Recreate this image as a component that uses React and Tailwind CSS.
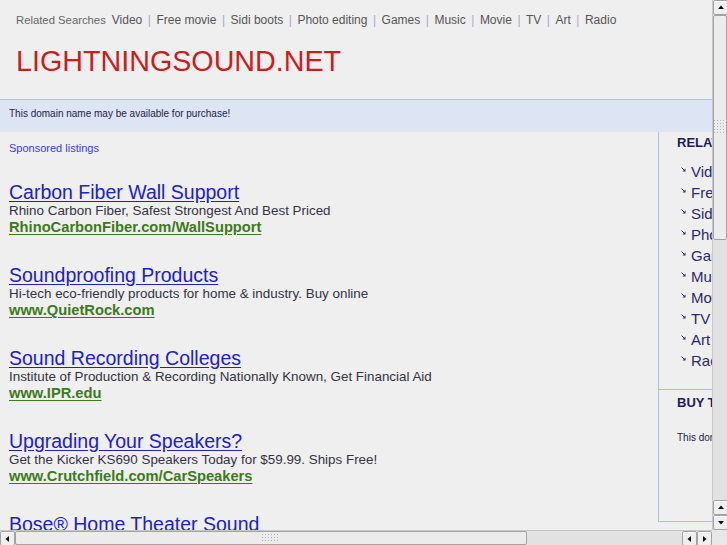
import React from "react"

const related = ["Video", "Free movie", "Sidi boots", "Photo editing", "Games", "Music", "Movie", "TV", "Art", "Radio"]

const ads = [
  {
    title: "Carbon Fiber Wall Support",
    desc: "Rhino Carbon Fiber, Safest Strongest And Best Priced",
    url: "RhinoCarbonFiber.com/WallSupport",
  },
  {
    title: "Soundproofing Products",
    desc: "Hi-tech eco-friendly products for home & industry. Buy online",
    url: "www.QuietRock.com",
  },
  {
    title: "Sound Recording Colleges",
    desc: "Institute of Production & Recording Nationally Known, Get Financial Aid",
    url: "www.IPR.edu",
  },
  {
    title: "Upgrading Your Speakers?",
    desc: "Get the Kicker KS690 Speakers Today for $59.99. Ships Free!",
    url: "www.Crutchfield.com/CarSpeakers",
  },
  {
    title: "Bose® Home Theater Sound",
    desc: "Experience lifelike sound from Bose home theater systems.",
    url: "www.Bose.com",
  },
]

// little down-right arrow used as list bullet
function Bullet() {
  return (
    <svg width="5" height="5" viewBox="0 0 5 5" className="shrink-0">
      <path d="M0.5 0.5 L3.5 3.5" stroke="#2a2a6a" strokeWidth="1" />
      <path d="M1.5 4.5 L4.5 4.5 L4.5 1.5 Z" fill="#2a2a6a" />
    </svg>
  )
}

function Grip({ vertical }) {
  const dots = []
  const cols = vertical ? 4 : 6
  const rows = vertical ? 5 : 3
  for (let r = 0; r < rows; r++) {
    for (let c = 0; c < cols; c++) {
      dots.push(<rect key={r + "-" + c} x={c * 3} y={r * 3} width="1" height="1" fill="#b4b4b4" />)
    }
  }
  return (
    <svg width={cols * 3} height={rows * 3}>
      {dots}
    </svg>
  )
}

function ArrowButton({ dir }) {
  const paths = {
    up: "M1 5 L4 1.5 L7 5 Z",
    down: "M1 2 L4 5.5 L7 2 Z",
    left: "M5 1 L1.5 4 L5 7 Z",
    right: "M2 1 L5.5 4 L2 7 Z",
  }
  return (
    <div className="w-[15px] h-[15px] flex items-center justify-center bg-[#efefef] border border-[#a3a3a3] rounded-[2px] shadow-[inset_0_1px_0_#ffffff]">
      <svg width="8" height="8" viewBox="0 0 8 8">
        <path d={paths[dir]} fill="#111" />
      </svg>
    </div>
  )
}

export default function App() {
  return (
    <div
      className="w-[727px] h-[545px] grid grid-cols-[712px_15px] grid-rows-[530px_15px] bg-[#efefef] overflow-hidden"
      style={{ fontFamily: '"Liberation Sans", Arial, sans-serif' }}
    >
      {/* Page viewport */}
      <div className="overflow-hidden">
        <div className="w-[930px]">
          {/* Header */}
          <div className="pl-4 pt-[13px] pb-[21px] border-b border-[#a9bfe6]">
            <div className="flex items-center h-[14px] text-[#555]">
              <span className="text-[11.3px] text-[#666] mr-[6px]">Related Searches</span>
              {related.map((r, i) => (
                <span key={r} className="flex items-center text-[12px]">
                  {i > 0 && <span className="mx-[5.5px] text-[#a8a8c8]">|</span>}
                  <span>{r}</span>
                </span>
              ))}
            </div>
            <div className="mt-[17px] h-[34px] leading-[34px] text-[28.7px] text-[#c81e1e]">LIGHTNINGSOUND.NET</div>
          </div>

          {/* Notice band */}
          <div className="h-[32px] bg-[#dde5f5] pl-[9px] pt-[8px]">
            <div className="text-[10px] leading-[12px] text-[#222244]">This domain name may be available for purchase!</div>
          </div>

          <div className="flex">
            {/* Sponsored listings */}
            <div className="w-[658px] pl-[9px] pt-[9px]">
              <div className="text-[11px] leading-[14px] text-[#3b3bdb]">Sponsored listings</div>
              <div className="mt-[27px] flex flex-col gap-[29px]">
                {ads.map((ad) => (
                  <div key={ad.title}>
                    <div className="text-[19.5px] leading-[20px] text-[#2020c8] underline underline-offset-2">{ad.title}</div>
                    <div className="text-[13.4px] leading-[17px] text-[#333344]">{ad.desc}</div>
                    <div className="text-[14.7px] leading-[17px] font-bold text-[#3c7a1c] underline underline-offset-2">{ad.url}</div>
                  </div>
                ))}
              </div>
            </div>

            {/* Sidebar */}
            <div className="w-[272px] h-[390px] border-l border-b border-[#a9bfe6] flex flex-col">
              <div className="h-[258px] border-b border-[#a9bfe6] pl-[18px] pt-[3px]">
                <div className="text-[13px] leading-[16px] font-bold text-[#1c1c5c]">RELATED SEARCHES</div>
                <div className="mt-[10px] flex flex-col">
                  {related.map((r) => (
                    <div key={r} className="flex items-start h-[21px] pl-[4px]">
                      <span className="mt-[6px] mr-[5px]">
                        <Bullet />
                      </span>
                      <span className="text-[15px] leading-[21px] text-[#2a2a6a]">{r}</span>
                    </div>
                  ))}
                </div>
              </div>
              <div className="pl-[18px] pt-[5px]">
                <div className="text-[13px] leading-[16px] font-bold text-[#1c1c5c]">BUY THIS DOMAIN</div>
                <div className="mt-[21px] text-[10px] leading-[12px] text-[#222244]">This domain may be for sale by its owner!</div>
              </div>
            </div>
          </div>
        </div>
      </div>

      {/* Vertical scrollbar */}
      <div className="flex flex-col bg-[#e2e2e2] border-l border-[#c8c8c8]">
        <ArrowButton dir="up" />
        <div className="h-[225px] bg-[#ececec] border border-[#a3a3a3] rounded-[2px] flex items-center justify-center">
          <Grip vertical />
        </div>
        <div className="flex-1" />
        <ArrowButton dir="up" />
        <ArrowButton dir="down" />
      </div>

      {/* Horizontal scrollbar */}
      <div className="flex bg-[#e2e2e2] border-t border-[#c8c8c8]">
        <ArrowButton dir="left" />
        <div className="w-[512px] bg-[#ececec] border border-[#a3a3a3] rounded-[2px] flex items-center justify-center">
          <Grip />
        </div>
        <div className="flex-1" />
        <ArrowButton dir="left" />
        <ArrowButton dir="right" />
      </div>

      {/* Corner */}
      <div className="bg-[#e8e8e8]" />
    </div>
  )
}
